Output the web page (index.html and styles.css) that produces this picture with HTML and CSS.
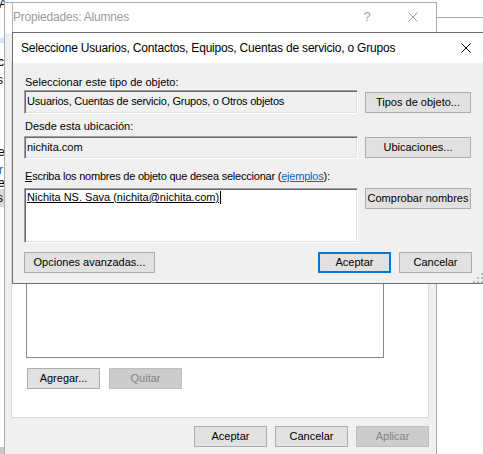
FILE: index.html
```html
<!DOCTYPE html>
<html lang="es">
<head>
<meta charset="utf-8">
<title>Seleccionar objetos</title>
<link rel="stylesheet" href="styles.css">
</head>
<body>
<div class="backwin">
  <span class="frag frag-a">A</span>
  <span class="frag frag-sel"></span>
  <span class="frag frag-c">c</span>
  <span class="frag frag-s1">s</span>
  <span class="frag frag-e1">e</span>
  <span class="frag frag-r">r</span>
  <span class="frag frag-e2">e</span>
  <span class="frag frag-s2">s</span>
  <span class="frag frag-blk"></span>
  <div class="rightline"></div>
</div>

<div class="window propwin">
  <div class="titlebar">
    <span class="title">Propiedades: Alumnes</span>
    <span class="tb-btn tb-help">?</span>
    <span class="tb-btn tb-close"><svg width="10" height="10" viewBox="0 0 10 10"><path d="M0.5 0.5L9.5 9.5M9.5 0.5L0.5 9.5" stroke="#9a9a9a" stroke-width="1" fill="none"/></svg></span>
  </div>
  <div class="propbody">
    <div class="tabpage">
      <div class="listbox"></div>
      <div class="btnrow">
        <button class="btn">Agregar...</button>
        <button class="btn" disabled>Quitar</button>
      </div>
    </div>
    <div class="footer">
      <button class="btn">Aceptar</button>
      <button class="btn">Cancelar</button>
      <button class="btn" disabled>Aplicar</button>
    </div>
  </div>
</div>

<div class="window dialog">
  <div class="titlebar dlg-titlebar">
    <span class="title">Seleccione Usuarios, Contactos, Equipos, Cuentas de servicio, o Grupos</span>
    <span class="dlg-close"><svg width="10" height="10" viewBox="0 0 10 10"><path d="M0.5 0.5L9.5 9.5M9.5 0.5L0.5 9.5" stroke="#000" stroke-width="1" fill="none"/></svg></span>
  </div>
  <div class="client">
    <div class="label l1">Seleccionar este tipo de objeto:</div>
    <div class="row r1">
      <div class="field f1">Usuarios, Cuentas de servicio, Grupos, o Otros objetos</div>
      <button class="btn wide">Tipos de objeto...</button>
    </div>
    <div class="label l2">Desde esta ubicación:</div>
    <div class="row r2">
      <div class="field f2">nichita.com</div>
      <button class="btn wide">Ubicaciones...</button>
    </div>
    <div class="label l3"><u>E</u>scriba los nombres de objeto que desea seleccionar (<a class="link">ejemplos</a>):</div>
    <div class="row r3">
      <div class="field memo"><span class="entry">Nichita NS. Sava (nichita@nichita.com)</span><span class="caret"></span></div>
      <button class="btn wide">Comprobar nombres</button>
    </div>
    <div class="actions">
      <button class="btn adv">Opciones avanzadas...</button>
      <button class="btn default">Aceptar</button>
      <button class="btn">Cancelar</button>
    </div>
    <svg class="grip" width="10" height="10" viewBox="0 0 10 10">
      <rect x="8" y="0" width="2" height="2" fill="#b8b8b8"/>
      <rect x="4" y="4" width="2" height="2" fill="#b8b8b8"/>
      <rect x="8" y="4" width="2" height="2" fill="#b8b8b8"/>
      <rect x="0" y="8" width="2" height="2" fill="#b8b8b8"/>
      <rect x="4" y="8" width="2" height="2" fill="#b8b8b8"/>
      <rect x="8" y="8" width="2" height="2" fill="#b8b8b8"/>
    </svg>
  </div>
</div>
</body>
</html>
```

FILE: styles.css
```css
* { box-sizing: border-box; margin: 0; padding: 0; }

html, body {
  width: 483px;
  height: 454px;
  overflow: hidden;
  background: #ffffff;
}

body {
  position: relative;
  font-family: "Liberation Sans", Arial, sans-serif;
  font-size: 11px;
  color: #000;
}

/* window behind, only a sliver visible */
.backwin {
  position: absolute;
  left: 0;
  top: 0;
  width: 483px;
  height: 454px;
  background: #fff;
}
.frag {
  position: absolute;
  left: 0;
  font-size: 12px;
  line-height: 14px;
}
.frag-a { top: -3px; left: -1px; }
.frag-sel { top: 38px; width: 5px; height: 5px; background: #cce8ff; }
.frag-c { top: 55px; left: -2px; }
.frag-s1 { top: 73px; left: -3px; }
.frag-e1 { top: 145px; left: -2px; }
.frag-r { top: 163px; left: -1px; color: #1a5fb4; }
.frag-e2 { top: 178px; left: -2px; line-height: 10px; height: 10px; overflow: hidden; }
.frag-s2 { top: 189px; left: -3px; width: 8px; height: 18px; padding-top: 2px; background: #d9d9d9; }
.frag-blk { top: 447px; width: 5px; height: 7px; background: #c8c8c8; }
.rightline {
  position: absolute;
  left: 436px;
  top: 17px;
  width: 47px;
  height: 1px;
  background: #a9a9a9;
}

/* generic window */
.window { position: absolute; }

.titlebar {
  display: flex;
  align-items: flex-start;
  height: 30px;
  background: #fff;
  font-size: 12px;
  line-height: 16px;
  letter-spacing: -0.2px;
}
.title { white-space: nowrap; }

/* Propiedades window (inactive, behind) */
.propwin {
  left: 4px;
  top: 2px;
  width: 433px;
  height: 470px;
  border: 1px solid #aaaaaa;
  border-bottom: none;
  background: #f0f0f0;
}
.propwin .titlebar {
  position: relative;
  padding: 6px 0 0 8px;
}
.propwin .titlebar::before {
  content: "";
  position: absolute;
  left: 7px;
  top: 0;
  width: 1px;
  height: 30px;
  background: #b4b4b4;
}
.propwin .title { color: #9a9a9a; }
.tb-btn {
  width: 46px;
  height: 24px;
  display: flex;
  justify-content: center;
  align-items: flex-start;
}
.tb-help {
  margin-left: auto;
  color: #a0a0a0;
  font-size: 13px;
  line-height: 16px;
  padding-top: 0;
}
.tb-close { padding-top: 3px; }

.propbody {
  padding: 28px 7px 0 6px;
  display: flex;
  flex-direction: column;
}
.tabpage {
  height: 357px;
  background: #fff;
  border: 1px solid #d9d9d9;
  display: flex;
  flex-direction: column;
  justify-content: flex-end;
  padding: 0 0 28px 14px;
}
.listbox {
  width: 358px;
  height: 158px;
  border: 1px solid #828790;
  background: #fff;
}
.btnrow {
  display: flex;
  gap: 9px;
  margin-top: 10px;
  padding-left: 1px;
}
.footer {
  display: flex;
  justify-content: flex-end;
  gap: 8px;
  margin-top: 8px;
}

/* buttons */
.btn {
  width: 73px;
  height: 21px;
  background: #e1e1e1;
  border: 1px solid #adadad;
  font-family: "Liberation Sans", Arial, sans-serif;
  font-size: 11px;
  line-height: 13px;
  color: #000;
  display: flex;
  align-items: center;
  justify-content: center;
  white-space: nowrap;
}
.btn:disabled {
  background: #cccccc;
  border-color: #bfbfbf;
  color: #838383;
}
.btn.default { border: 2px solid #0078d7; }
.btn.wide { width: 106px; }
.btn.adv { width: 131px; }

/* front dialog */
.dialog {
  left: 12px;
  top: 32px;
  width: 472px;
  height: 252px;
  border: 1px solid #707070;
  background: #f0f0f0;
}
.dlg-titlebar { padding: 7px 0 0 8px; }
.dlg-close {
  margin-left: auto;
  width: 30px;
  display: flex;
  justify-content: center;
  padding-top: 3px;
  margin-right: 2px;
}

.client {
  position: relative;
  height: 220px;
  padding: 13px 11px 0 11px;
  display: flex;
  flex-direction: column;
}
.label {
  line-height: 13px;
  height: 13px;
  padding-left: 1px;
  white-space: nowrap;
}
.link { color: #0066cc; text-decoration: underline; }
.l2 { margin-top: 6px; }
.l3 { margin-top: 11px; letter-spacing: -0.22px; }

.row {
  display: flex;
  gap: 7px;
  align-items: flex-start;
}
.r1 { margin-top: 1px; }
.r1 .btn { margin-top: 2px; }
.r2 { margin-top: 3px; }
.r2 .btn { margin-top: 1px; }
.r3 { margin-top: 5px; }

.field {
  width: 334px;
  height: 24px;
  border: 1px solid;
  border-color: #a0a0a0 #ffffff #ffffff #a0a0a0;
  box-shadow: inset 1px 1px 0 #696969, inset -1px -1px 0 #e3e3e3;
  padding: 4px 0 0 2px;
  line-height: 13px;
  white-space: nowrap;
  overflow: hidden;
}
.f1 { letter-spacing: -0.22px; }
.f2 { height: 23px; }
.memo {
  height: 55px;
  background: #fff;
  padding-top: 2px;
  display: flex;
  align-items: flex-start;
}
.entry { text-decoration: underline; }
.caret {
  display: block;
  width: 1px;
  height: 13px;
  background: #000;
  margin-left: 1px;
}

.actions {
  display: flex;
  margin-top: 9px;
  gap: 8px;
}
.actions .default { margin-left: auto; }

.grip {
  position: absolute;
  right: 0;
  bottom: 0;
}
```
